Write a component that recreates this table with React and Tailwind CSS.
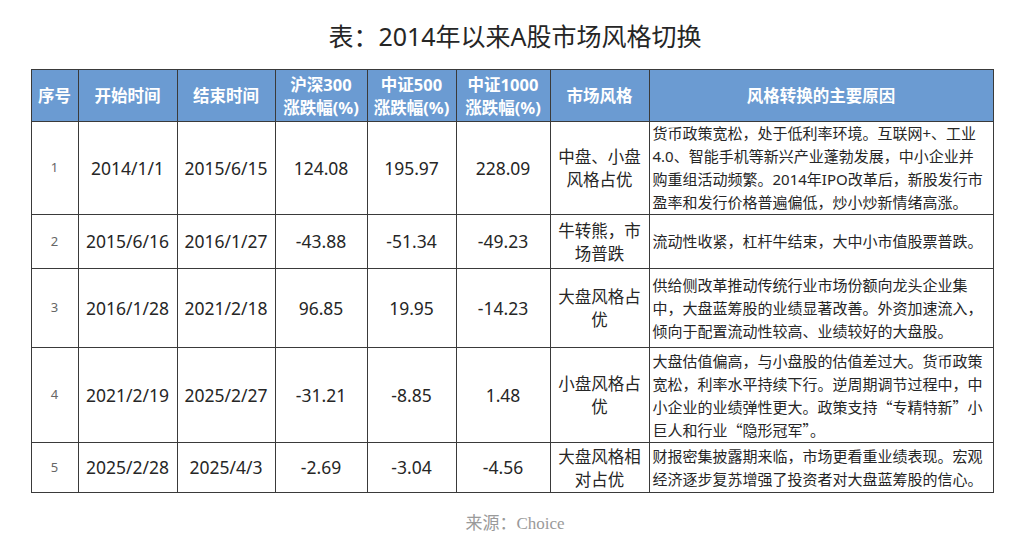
const COLS = [47, 99, 98, 92, 89, 94, 99, 344]

const HEAD = [
  ['序号'],
  ['开始时间'],
  ['结束时间'],
  ['沪深300', '涨跌幅(%)'],
  ['中证500', '涨跌幅(%)'],
  ['中证1000', '涨跌幅(%)'],
  ['市场风格'],
  ['风格转换的主要原因'],
]

const ROWS = [
  {
    h: 'h-[92px]',
    cells: ['1', '2014/1/1', '2015/6/15', '124.08', '195.97', '228.09'],
    style: ['中盘、小盘', '风格占优'],
    reason: '货币政策宽松，处于低利率环境。互联网+、工业4.0、智能手机等新兴产业蓬勃发展，中小企业并购重组活动频繁。2014年IPO改革后，新股发行市盈率和发行价格普遍偏低，炒小炒新情绪高涨。',
  },
  {
    h: 'h-[54px]',
    cells: ['2', '2015/6/16', '2016/1/27', '-43.88', '-51.34', '-49.23'],
    style: ['牛转熊，市', '场普跌'],
    reason: '流动性收紧，杠杆牛结束，大中小市值股票普跌。',
  },
  {
    h: 'h-[79px]',
    cells: ['3', '2016/1/28', '2021/2/18', '96.85', '19.95', '-14.23'],
    style: ['大盘风格占', '优'],
    reason: '供给侧改革推动传统行业市场份额向龙头企业集中，大盘蓝筹股的业绩显著改善。外资加速流入，倾向于配置流动性较高、业绩较好的大盘股。',
  },
  {
    h: 'h-[95px]',
    cells: ['4', '2021/2/19', '2025/2/27', '-31.21', '-8.85', '1.48'],
    style: ['小盘风格占', '优'],
    // full-width quotes here, so this row is set in the CJK face
    cjk: true,
    reason: '大盘估值偏高，与小盘股的估值差过大。货币政策宽松，利率水平持续下行。逆周期调节过程中，中小企业的业绩弹性更大。政策支持“专精特新”小巨人和行业“隐形冠军”。',
  },
  {
    h: 'h-[50px]',
    cells: ['5', '2025/2/28', '2025/4/3', '-2.69', '-3.04', '-4.56'],
    style: ['大盘风格相', '对占优'],
    reason: '财报密集披露期来临，市场更看重业绩表现。宏观经济逐步复苏增强了投资者对大盘蓝筹股的信心。',
  },
]

export default function App() {
  return (
    <div className="flex h-[548px] w-[1030px] flex-col items-center bg-white font-['Noto_Sans','Noto_Sans_CJK_SC',sans-serif] text-[#222]">
      <h1 className="mt-[19px] text-[25px] leading-[35px] text-[#262626]">表：2014年以来A股市场风格切换</h1>

      <table className="mt-[15px] ml-[-6px] table-fixed border-collapse border-t border-t-[#9a9a9a]">
        <colgroup>
          {COLS.map((w, i) => (
            <col key={i} style={{ width: w }} />
          ))}
        </colgroup>
        <thead>
          <tr className="h-[52px] bg-[#6b9bd2]">
            {HEAD.map((lines, i) => (
              <th
                key={i}
                className="border border-[#3a3a3a] p-0 text-center text-[16.5px] font-bold leading-[23px] text-white"
              >
                {lines.map((l) => (
                  <div key={l}>{l}</div>
                ))}
              </th>
            ))}
          </tr>
        </thead>
        <tbody>
          {ROWS.map((r) => (
            <tr key={r.cells[0]} className={r.h}>
              {r.cells.map((c, i) => (
                <td
                  key={i}
                  className={
                    i === 0
                      ? 'border border-[#3a3a3a] p-0 text-center text-[13px] text-[#666]'
                      : 'border border-[#3a3a3a] p-0 text-center text-[17.5px] text-[#262626]'
                  }
                >
                  {c}
                </td>
              ))}
              <td className="border border-[#3a3a3a] p-0 text-center text-[16.5px] leading-[23px] text-[#262626]">
                {r.style.map((l) => (
                  <div key={l}>{l}</div>
                ))}
              </td>
              <td
                className={
                  r.cjk
                    ? "border border-[#3a3a3a] py-0 pl-[3px] pr-[4px] text-left font-['Noto_Sans_CJK_SC',sans-serif] text-[15px] leading-[23px] text-[#262626]"
                    : 'border border-[#3a3a3a] py-0 pl-[3px] pr-[4px] text-left text-[15px] leading-[23px] text-[#262626]'
                }
              >
                {r.reason}
              </td>
            </tr>
          ))}
        </tbody>
      </table>

      <p className="mt-[17px] text-[17px] text-[#9a9a9a]">
        来源：<span className="font-['Liberation_Serif',serif]">Choice</span>
      </p>
    </div>
  )
}
